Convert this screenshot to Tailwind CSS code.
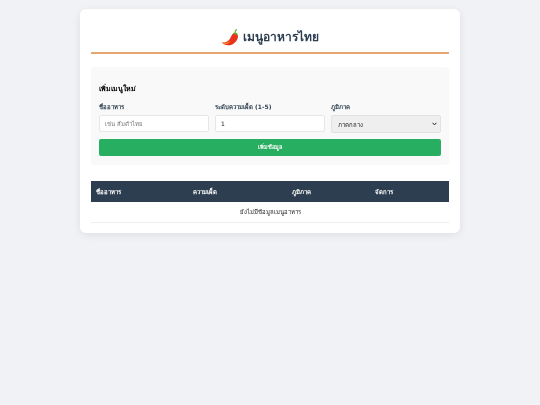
<!DOCTYPE html>
<html lang="th">
<head>
    <meta charset="UTF-8">
    <meta name="viewport" content="width=device-width, initial-scale=1.0">
    <title>เมนูอาหารไทย</title>
    <script src="https://cdn.jsdelivr.net/npm/@tailwindcss/browser@4"></script>
</head>
<body class="bg-[#f0f2f5] min-h-screen font-['DejaVu_Sans','Noto_Sans',sans-serif] text-[#333] pt-[9px]">

    <div class="blur-[0.3px] w-[380px] h-[224px] mx-auto bg-white rounded-[6px] shadow-[0_2px_8px_rgba(0,0,0,0.08)] px-[11px] pt-[14px]">
        <!-- header -->
        <h1 class="h-[28px] flex items-center justify-center gap-[4px] text-[12px] leading-none font-semibold text-[#2c3e50]">
            <svg class="w-[18px] h-[18px]" viewBox="0 0 18 18">
                <path d="M1 14.5C4.5 15 8 13.4 9.6 9.6C10.2 8 10.8 6.4 12.4 5.4C14.6 4.8 16.6 6 17 8C17.2 11 14.8 14.6 11.2 16.4C7.4 18 3 17.4 1 14.5Z" fill="#e8341c"/>
                <path d="M1 14.5C4 15.4 7.4 15 9.6 12.6C8.4 16.2 3.6 17.2 1 14.5Z" fill="#f7941d"/>
                <path d="M11.8 6C12.8 4.2 15.2 4 16.8 6.2L16.2 7.4C15 6.2 13.6 6 12.6 6.6Z" fill="#6aa32f"/>
                <path d="M14 4.8C14 3.4 14.6 2.2 15.8 1.2" fill="none" stroke="#7cb342" stroke-width="1.3"/>
            </svg>
            <span>เมนูอาหารไทย</span>
        </h1>
        <div class="mt-[1px] h-[2px] bg-[#e5a66f]"></div>

        <!-- form -->
        <form class="mt-[13px] h-[98px] bg-[#f9f9f9] rounded-[3px] px-[8px] pt-[15px]">
            <h2 class="text-[7px] leading-[14px] font-bold text-black">เพิ่มเมนูใหม่</h2>
            <div class="mt-[5px] grid grid-cols-3 gap-[6px]">
                <div>
                    <label class="block h-[14px] text-[6px] leading-[12px] font-semibold text-[#2c3e50]">ชื่ออาหาร</label>
                    <input type="text" placeholder="เช่น ส้มตำไทย" class="block w-full h-[17px] px-[5px] bg-white border border-[#e6e6e6] rounded-[2px] text-[6px] placeholder:text-[#777]">
                </div>
                <div>
                    <label class="block h-[14px] text-[6px] leading-[12px] font-semibold text-[#2c3e50]">ระดับความเผ็ด (1-5)</label>
                    <input type="number" value="1" class="block w-full h-[17px] px-[5px] bg-white border border-[#e6e6e6] rounded-[2px] text-[6px] text-[#222]">
                </div>
                <div>
                    <label class="block h-[14px] text-[6px] leading-[12px] font-semibold text-[#2c3e50]">ภูมิภาค</label>
                    <div class="w-full h-[18px] pl-[6px] pr-[3px] bg-[#efefef] border border-[#e2e2e2] rounded-[2px] flex items-center justify-between text-[6px] text-[#222]">
                        <span>ภาคกลาง</span>
                        <svg class="w-[5px] h-[4px]" viewBox="0 0 5 4"><path d="M.6.8 2.5 2.9 4.4.8" fill="none" stroke="#222" stroke-width="1"/></svg>
                    </div>
                </div>
            </div>
            <button type="button" class="block mt-[6px] w-full h-[17px] bg-[#27ae60] rounded-[2px] text-white text-[5.5px] font-semibold leading-none">เพิ่มข้อมูล</button>
        </form>

        <!-- table -->
        <table class="mt-[16px] w-full table-fixed border-collapse text-[6px]">
            <thead>
                <tr class="h-[21px] bg-[#2c3e50] text-white text-left">
                    <th class="w-[97px] pl-[5px] font-semibold">ชื่ออาหาร</th>
                    <th class="w-[99px] pl-[5px] font-semibold">ความเผ็ด</th>
                    <th class="w-[83px] pl-[5px] font-semibold">ภูมิภาค</th>
                    <th class="pl-[5px] font-semibold">จัดการ</th>
                </tr>
            </thead>
            <tbody>
                <tr class="h-[20px] border-b border-[#eeeeee]">
                    <td colspan="4" class="text-center text-[#222]">ยังไม่มีข้อมูลเมนูอาหาร</td>
                </tr>
            </tbody>
        </table>
    </div>

</body>
</html>
